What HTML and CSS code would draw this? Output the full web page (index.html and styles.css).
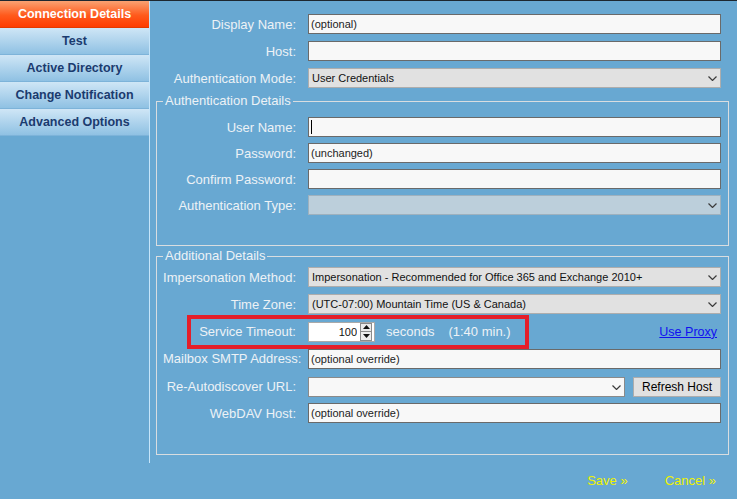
FILE: index.html
```html
<!DOCTYPE html>
<html lang="en">
<head>
  <meta charset="UTF-8">
  <title>Connection Details</title>
  <link rel="stylesheet" href="styles.css">
</head>
<body>

  <div class="layout">
    <nav class="sidebar">
      <a class="tab active" href="#">Connection Details</a>
      <a class="tab" href="#">Test</a>
      <a class="tab" href="#">Active Directory</a>
      <a class="tab" href="#">Change Notification</a>
      <a class="tab" href="#">Advanced Options</a>
    </nav>

    <div class="form">
      <div class="rows">
        <div class="row">
          <label>Display Name:</label>
          <input class="field" type="text" value="(optional)">
        </div>
        <div class="row">
          <label>Host:</label>
          <input class="field" type="text" value="">
        </div>
        <div class="row">
          <label>Authentication Mode:</label>
          <div class="select-wrap">
            <select class="dropdown"><option>User Credentials</option></select>
            <svg class="chevron" width="9" height="5" viewBox="0 0 9 5"><path d="M0.5 0.5 L4.5 4.5 L8.5 0.5" fill="none" stroke="#3c3c3c" stroke-width="1.2"/></svg>
          </div>
        </div>
      </div>

      <fieldset class="group group-auth">
        <legend>Authentication Details</legend>
        <div class="rows tight">
          <div class="row">
            <label>User Name:</label>
            <div class="input-wrap">
              <input class="field" type="text" value="">
              <span class="caret"></span>
            </div>
          </div>
          <div class="row">
            <label>Password:</label>
            <input class="field" type="text" value="(unchanged)">
          </div>
          <div class="row">
            <label>Confirm Password:</label>
            <input class="field" type="text" value="">
          </div>
          <div class="row">
            <label>Authentication Type:</label>
            <div class="select-wrap">
              <select class="dropdown" disabled><option></option></select>
              <svg class="chevron" width="9" height="5" viewBox="0 0 9 5"><path d="M0.5 0.5 L4.5 4.5 L8.5 0.5" fill="none" stroke="#3c3c3c" stroke-width="1.2"/></svg>
            </div>
          </div>
        </div>
      </fieldset>

      <fieldset class="group group-extra">
        <legend>Additional Details</legend>
        <div class="rows loose">
          <div class="row">
            <label>Impersonation Method:</label>
            <div class="select-wrap">
              <select class="dropdown"><option>Impersonation - Recommended for Office 365 and Exchange 2010+</option></select>
              <svg class="chevron" width="9" height="5" viewBox="0 0 9 5"><path d="M0.5 0.5 L4.5 4.5 L8.5 0.5" fill="none" stroke="#3c3c3c" stroke-width="1.2"/></svg>
            </div>
          </div>
          <div class="row">
            <label>Time Zone:</label>
            <div class="select-wrap">
              <select class="dropdown"><option>(UTC-07:00) Mountain Time (US &amp; Canada)</option></select>
              <svg class="chevron" width="9" height="5" viewBox="0 0 9 5"><path d="M0.5 0.5 L4.5 4.5 L8.5 0.5" fill="none" stroke="#3c3c3c" stroke-width="1.2"/></svg>
            </div>
          </div>
          <div class="row timeout-row">
            <label>Service Timeout:</label>
            <div class="timeout">
              <div class="spin-box">
                <input class="spin-input" type="text" value="100">
                <span class="spinner">
                  <span class="spin-btn"><svg width="7" height="4" viewBox="0 0 7 4"><path d="M0 4 L3.5 0 L7 4 Z" fill="#111"/></svg></span>
                  <span class="spin-btn"><svg width="7" height="4" viewBox="0 0 7 4"><path d="M0 0 L3.5 4 L7 0 Z" fill="#111"/></svg></span>
                </span>
              </div>
              <span class="unit">seconds</span>
              <span class="unit">(1:40 min.)</span>
              <a class="proxy-link" href="#">Use Proxy</a>
            </div>
            <div class="highlight"></div>
          </div>
          <div class="row">
            <label>Mailbox SMTP Address:</label>
            <input class="field" type="text" value="(optional override)">
          </div>
          <div class="row">
            <label>Re-Autodiscover URL:</label>
            <div class="combo">
              <div class="select-wrap">
                <select class="dropdown light"><option></option></select>
                <svg class="chevron" width="9" height="5" viewBox="0 0 9 5"><path d="M0.5 0.5 L4.5 4.5 L8.5 0.5" fill="none" stroke="#3c3c3c" stroke-width="1.2"/></svg>
              </div>
              <button class="btn" type="button">Refresh Host</button>
            </div>
          </div>
          <div class="row">
            <label>WebDAV Host:</label>
            <input class="field" type="text" value="(optional override)">
          </div>
        </div>
      </fieldset>
    </div>
  </div>

  <div class="actions">
    <a href="#">Save &raquo;</a>
    <a href="#">Cancel &raquo;</a>
  </div>

</body>
</html>
```

FILE: styles.css
```css
* {
  box-sizing: border-box;
}

body {
  margin: 0;
  background-color: #68a8d2;
  border-top: 1px solid #1d2730;
  font-family: "Liberation Sans", Arial, sans-serif;
  font-size: 13px;
  color: #edf2f6;
}

.layout {
  display: flex;
}

/* left menu */
.sidebar {
  width: 150px;
  flex-shrink: 0;
  border-right: 1px solid #c6e5fa;
  display: flex;
  flex-direction: column;
}

.tab {
  display: block;
  height: 27px;
  line-height: 27px;
  text-align: center;
  font-size: 12.5px;
  font-weight: bold;
  color: #1b3b6f;
  text-decoration: none;
  background: linear-gradient(#cfe6f6, #8fc1e3);
  border-bottom: 1px solid #7db3d9;
}

.tab.active {
  color: #ffffff;
  background: linear-gradient(#f9a272, #ff5a1c 55%, #ff3c00);
  border-bottom-color: #e23a00;
}

/* form area */
.form {
  flex: 1;
  padding: 13px 0 8px 0;
}

.rows {
  display: flex;
  flex-direction: column;
  gap: 7px;
}

.rows.tight {
  gap: 6px;
}

.rows.loose {
  gap: 7.25px;
}

.row {
  display: grid;
  grid-template-columns: 146px 413px;
  column-gap: 12px;
  align-items: center;
  height: 20px;
}

.group .row {
  grid-template-columns: 133px 413px;
}

.row label {
  text-align: right;
  white-space: nowrap;
}

.field {
  width: 100%;
  height: 20px;
  margin: 0;
  padding: 0 2px;
  border: 1px solid #6a6a6a;
  background: #f8f8f8;
  font-family: "Liberation Sans", Arial, sans-serif;
  font-size: 11px;
  color: #1c1c1c;
  outline: none;
}

.input-wrap {
  position: relative;
  height: 20px;
}

.caret {
  position: absolute;
  left: 3px;
  top: 3px;
  width: 1px;
  height: 14px;
  background: #000;
}

.select-wrap {
  position: relative;
  height: 20px;
  flex: 1;
}

.dropdown {
  appearance: none;
  width: 100%;
  height: 20px;
  margin: 0;
  padding: 0 3px;
  border: 1px solid #adadad;
  border-radius: 0;
  background: #e1e1e1;
  font-family: "Liberation Sans", Arial, sans-serif;
  font-size: 11px;
  color: #111;
}

.dropdown:disabled {
  background: #e0e0e0;
  border-color: #b6b6b6;
}

.dropdown.light {
  background: #f8f8f8;
  border-color: #8a8a8a;
}

.chevron {
  position: absolute;
  right: 4px;
  top: 8px;
  pointer-events: none;
}

/* fieldsets */
.group {
  margin: 6px 8px 0 6px;
  padding: 9px 7px 30px 6px;
  border: 1px solid #d9dde0;
}

.group-extra {
  margin-top: 3px;
  padding-top: 4px;
  padding-bottom: 31px;
}

.group legend {
  padding: 0 2px;
  line-height: 14px;
  font-size: 13px;
}

/* service timeout */
.timeout-row {
  position: relative;
}

.timeout {
  display: flex;
  align-items: center;
  height: 20px;
}

.spin-box {
  display: flex;
  width: 67px;
  height: 20px;
  border: 1px solid #a9a9a9;
  background: #fff;
}

.spin-input {
  width: 50px;
  height: 18px;
  border: none;
  padding: 0 2px 0 0;
  text-align: right;
  font-family: "Liberation Sans", Arial, sans-serif;
  font-size: 11px;
  color: #111;
  outline: none;
}

.spinner {
  display: flex;
  flex-direction: column;
  justify-content: center;
  margin-left: 1px;
}

.spin-btn {
  display: flex;
  align-items: center;
  justify-content: center;
  width: 12px;
  height: 9px;
  border: 1px solid #8c8c8c;
  background: #ececec;
}

.spin-btn + .spin-btn {
  border-top: none;
}

.unit {
  margin-left: 11px;
}

.unit + .unit {
  margin-left: 14px;
}

.proxy-link {
  margin-left: auto;
  margin-right: 4px;
  color: #1010f0;
  font-size: 12.5px;
}

.highlight {
  position: absolute;
  left: 24px;
  top: -7px;
  width: 342px;
  height: 34px;
  border: 4px solid #e41e2a;
  pointer-events: none;
}

.combo {
  display: flex;
  gap: 8px;
  align-items: center;
}

.btn {
  width: 88px;
  height: 20px;
  margin: 1px 0 0 0;
  padding: 0;
  border: 1px solid #adadad;
  background: #e1e1e1;
  font-family: "Liberation Sans", Arial, sans-serif;
  font-size: 12px;
  color: #000;
}

/* bottom links */
.actions {
  display: flex;
  justify-content: flex-end;
  gap: 37px;
  padding: 10px 21px 0 0;
}

.actions a {
  color: #eef200;
  text-decoration: none;
  font-size: 13px;
}
```
